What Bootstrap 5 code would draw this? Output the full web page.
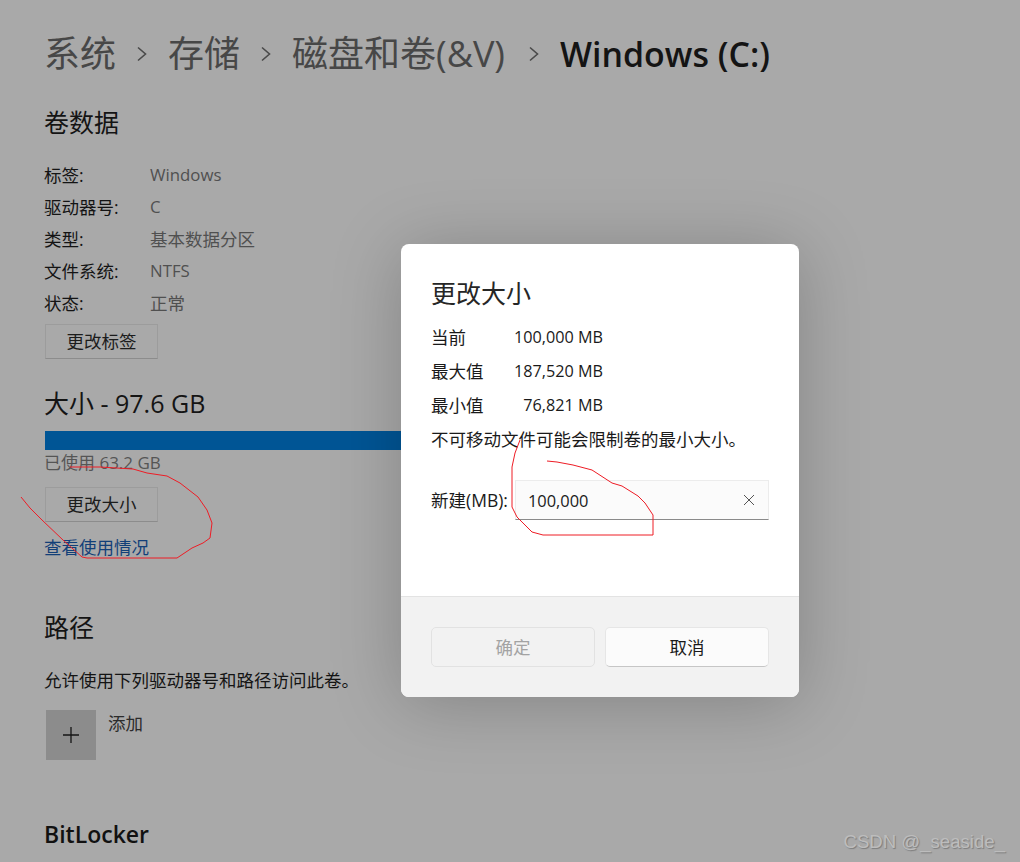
<!DOCTYPE html>
<html lang="zh-CN">
<head>
    <meta charset="UTF-8">
    <meta name="viewport" content="width=device-width, initial-scale=1">
    <title>更改大小</title>
    <link href="https://cdn.jsdelivr.net/npm/bootstrap@5.3.0/dist/css/bootstrap.min.css" rel="stylesheet">
    <style>
        html, body { height: 862px; overflow: hidden; }
        body {
            background: #a9a9a9;
            color: #141414;
            font-family: "Open Sans", "Noto Sans CJK SC", sans-serif;
            font-size: 17.5px;
            position: relative;
        }
        .page-wrap { padding: 29px 0 0 44px; }
        .crumbs { height: 50px; font-size: 36px; line-height: 50px; color: #474747; white-space: nowrap; }
        .crumbs svg { margin: 0 18px; }
        .crumbs svg:last-of-type { margin: 0 18px 0 21px; }
        .crumbs b { color: #141414; font-weight: 600; font-size: 33.9px; }
        .sec-title { font-size: 25px; line-height: 36px; margin: 0; font-weight: 400; }
        .sec-one { margin-top: 25px; }
        .sec-two { margin-top: 26px; }
        .sec-three { margin-top: 49px; }
        .info-list { margin-top: 19px; }
        .info-row { height: 32px; line-height: 32px; }
        .info-row span:first-child { width: 106px; }
        .info-row span:last-child { color: #505050; }
        .info-row .val-latin:last-child { font-size: 16.8px; }
        .win-btn {
            width: 113px; height: 35px; margin-left: 1px; padding: 0;
            background: #a9a9a9; color: #1c1c1c; font-size: 17.5px; line-height: 33px;
            border: 1px solid #9c9c9c; border-bottom-color: #8c8c8c; border-radius: 0;
        }
        .btn-label { margin-top: 5px; }
        .btn-size { margin-top: 11px; }
        .size-bar { height: 19px; width: 720px; margin: 10px 0 0 1px; border-radius: 0; background: #8f8f8f; }
        .size-bar .progress-bar { background: #005595; }
        .used-txt { color: #555; line-height: 26px; font-size: 17px; }
        .usage-link { color: #123f78; text-decoration: none; line-height: 26px; display: block; margin-top: 12px; }
        .path-note { margin: 22px 0 0; line-height: 26px; }
        .add-row { margin-top: 17px; }
        .add-box { width: 50px; height: 50px; margin-left: 2px; background: #8c8c8c; }
        .add-lbl { margin: 0 0 0 12px; line-height: 26px; color: #2b2b2b; }
        .bl-title { font-size: 23px; font-weight: 600; line-height: 34px; color: #111; margin-top: 57px; }

        .size-dialog {
            position: absolute; left: 401px; top: 244px; width: 398px; height: 453px;
            border: 0; border-radius: 8px; overflow: hidden; background: #fff; color: #1a1a1a;
        }
        .dialog-glow {
            position: absolute; left: 401px; top: 244px; width: 398px; height: 453px;
            border-radius: 8px; box-shadow: 0 6px 70px rgba(0,0,0,.22);
        }
        .size-dialog .modal-body { padding: 30px 30px 0; height: 352px; flex: none; }
        .dlg-title { font-size: 25px; line-height: 38px; margin: 0 0 8px; font-weight: 400; color: #262626; }
        .dlg-row { height: 34px; line-height: 34px; width: 172px; }
        .dlg-row span:last-child { font-size: 16.2px; }
        .dlg-note { line-height: 34px; white-space: nowrap; }
        .new-row { margin-top: 24px; }
        .new-row label { width: 84px; white-space: nowrap; }
        .new-input { width: 254px; position: relative; }
        .new-input input {
            height: 40px; padding: 0 40px 0 12px; font-size: 16.4px; color: #1a1a1a;
            background: #fbfbfb; border: 1px solid #ececec; border-bottom: 1px solid #8a8a8a; border-radius: 0;
        }
        .clear-x { position: absolute; right: 14px; top: 14px; }
        .size-dialog .modal-footer {
            height: 101px; padding: 30px 30px 0; background: #f2f2f2;
            border-top: 1px solid #e3e3e3; border-radius: 0; gap: 10px;
            flex-wrap: nowrap; align-items: flex-start; justify-content: flex-start;
        }
        .size-dialog .modal-footer .btn {
            width: 164px; height: 40px; margin: 0; padding: 0; font-size: 17.5px; line-height: 38px; border-radius: 5px;
        }
        .btn-ok, .btn-ok:disabled { background: #f2f2f2; color: #a3a3a3; border: 1px solid #e2e2e2; opacity: 1; }
        .btn-cancel { background: #fbfbfb; color: #1a1a1a; border: 1px solid #e6e6e6; border-bottom-color: #c6c6c6; }
        .pen-layer { position: absolute; left: 0; top: 0; pointer-events: none; }
        .mark-text {
            position: absolute; right: 15px; top: 830px; line-height: 24px; font-size: 18.6px;
            font-family: "Liberation Sans", sans-serif; color: #bdbdbd;
            text-shadow: 1px 1px 1px #7c7c7c;
        }
    </style>
</head>
<body>

<div class="page-wrap">
    <!-- Breadcrumb -->
    <div class="crumbs d-flex align-items-center">
        <span>系统</span>
        <svg width="16" height="16" viewBox="0 0 16 16" fill="none" stroke="#4a4a4a" stroke-width="1.6"><path d="M4 1.5 11.5 8 4 14.5"/></svg>
        <span>存储</span>
        <svg width="16" height="16" viewBox="0 0 16 16" fill="none" stroke="#4a4a4a" stroke-width="1.6"><path d="M4 1.5 11.5 8 4 14.5"/></svg>
        <span>磁盘和卷(&amp;V)</span>
        <svg width="16" height="16" viewBox="0 0 16 16" fill="none" stroke="#4a4a4a" stroke-width="1.6"><path d="M4 1.5 11.5 8 4 14.5"/></svg>
        <b>Windows (C:)</b>
    </div>

    <h2 class="sec-title sec-one">卷数据</h2>
    <div class="info-list">
        <div class="info-row d-flex"><span>标签:</span><span class="val-latin">Windows</span></div>
        <div class="info-row d-flex"><span>驱动器号:</span><span class="val-latin">C</span></div>
        <div class="info-row d-flex"><span>类型:</span><span>基本数据分区</span></div>
        <div class="info-row d-flex"><span>文件系统:</span><span class="val-latin">NTFS</span></div>
        <div class="info-row d-flex"><span>状态:</span><span>正常</span></div>
    </div>
    <button type="button" class="btn win-btn btn-label d-block">更改标签</button>

    <h2 class="sec-title sec-two">大小 - 97.6 GB</h2>
    <div class="progress size-bar"><div class="progress-bar" style="width: 100%"></div></div>
    <div class="used-txt">已使用 63.2 GB</div>
    <button type="button" class="btn win-btn btn-size d-block">更改大小</button>
    <a class="usage-link" href="#">查看使用情况</a>

    <h2 class="sec-title sec-three">路径</h2>
    <p class="path-note">允许使用下列驱动器号和路径访问此卷。</p>
    <div class="add-row d-flex">
        <div class="add-box d-flex align-items-center justify-content-center">
            <svg width="18" height="18" viewBox="0 0 18 18" stroke="#141414" stroke-width="1.3"><path d="M9 1v16M1 9h16"/></svg>
        </div>
        <div class="add-lbl">添加</div>
    </div>
    <div class="bl-title">BitLocker</div>
</div>

<!-- Resize dialog -->
<div class="dialog-glow"></div>
<div class="modal-content size-dialog">
    <div class="modal-body">
        <h3 class="dlg-title">更改大小</h3>
        <div class="dlg-row d-flex justify-content-between"><span>当前</span><span>100,000 MB</span></div>
        <div class="dlg-row d-flex justify-content-between"><span>最大值</span><span>187,520 MB</span></div>
        <div class="dlg-row d-flex justify-content-between"><span>最小值</span><span>76,821 MB</span></div>
        <div class="dlg-note">不可移动文件可能会限制卷的最小大小。</div>
        <div class="new-row d-flex align-items-center">
            <label for="newSize">新建(MB):</label>
            <div class="new-input">
                <input id="newSize" type="text" class="form-control" value="100,000">
                <svg class="clear-x" width="12" height="12" viewBox="0 0 12 12" stroke="#555" stroke-width="1"><path d="M1 1l10 10M11 1 1 11"/></svg>
            </div>
        </div>
    </div>
    <div class="modal-footer">
        <button type="button" class="btn btn-ok" disabled>确定</button>
        <button type="button" class="btn btn-cancel">取消</button>
    </div>
</div>

<!-- Hand-drawn red marks on top of the screenshot -->
<svg class="pen-layer" width="1020" height="862" fill="none" stroke="#ee1c25" stroke-width="1">
    <path d="M21 497 30 508 42 520 63 540 82 557 87 558H177L192 548 203 543 210 538 212 523 207 510 198 497 180 483 167 476 147 473 133 469 100 467H70"/>
    <path d="M520 440 515 453 512 467V507L517 517 532 532 543 535H653V515L645 503 638 496 622 486 612 483 592 470 573 465 557 462 547 461"/>
</svg>

<div class="mark-text">CSDN @_seaside_</div>

<script src="https://cdn.jsdelivr.net/npm/bootstrap@5.3.0/dist/js/bootstrap.bundle.min.js"></script>
</body>
</html>
